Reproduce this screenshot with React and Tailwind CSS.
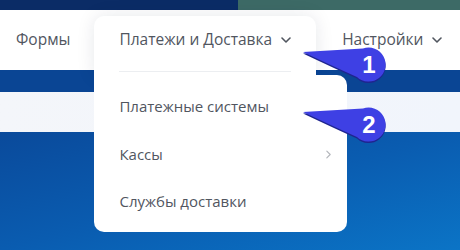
import React from 'react';

const Chevron = ({ className }) => (
    <svg viewBox="0 0 10 6" className={className} fill="none" stroke="currentColor" strokeWidth="1.6" strokeLinecap="round" strokeLinejoin="round">
        <path d="M1 1l4 4 4-4" />
    </svg>
);

// callout badge: circle with a tail pointing to the left
const Badge = ({ cx, cy, n }) => {
    const r = 17;
    const tip = `${cx - 66} ${cy - 13}`;
    const d = `M ${tip} L ${cx - 6} ${cy - r + 0.5} A ${r} ${r} 0 1 1 ${cx - 12} ${cy + 12} Q ${cx - 30} ${cy + 4} ${tip} Z`;
    return (
        <g>
            <path d={d} fill="#1f2590" transform="translate(0 1.5)" />
            <path d={d} fill="#3e40e4" />
            <text x={cx} y={cy + 8} textAnchor="middle" fill="#fff" fontSize="24" fontWeight="700" fontFamily="'Liberation Sans', Arial, sans-serif">{n}</text>
        </g>
    );
};

export default function App() {
    return (
        <div className="relative w-[460px] h-[250px] overflow-hidden bg-[#0a58ac] text-[15.5px] text-[#51565f]" style={{ fontFamily: "'Open Sans', 'Noto Sans', sans-serif" }}>
            {/* top band */}
            <div className="flex h-[10px]">
                <div className="w-[238px] bg-[#0b2c66]" />
                <div className="flex-1 bg-[#3d6a66]" />
            </div>

            {/* nav */}
            <div className="relative z-10 flex h-[60px] items-center bg-white pl-4">
                <span>Формы</span>
                <div className="relative ml-[24px] flex h-full items-center px-[25px]">
                    <div className="absolute left-0 right-0 top-[6px] h-[60px] rounded-t-[10px] bg-white shadow-[0_0_18px_rgba(20,30,60,0.10)]">
                        <div className="absolute bottom-[4px] left-[25px] right-[25px] h-px bg-[#eceef1]" />
                    </div>
                    <div className="absolute left-0 top-[65px] h-[157px] w-[253px] rounded-b-[10px] rounded-tr-[10px] bg-white pt-[7px] text-[15px]">
                        <div className="flex h-[48px] items-center px-[25px]">Платежные системы</div>
                        <div className="flex h-[48px] items-center justify-between pl-[25px] pr-[16px]">
                            <span>Кассы</span>
                            <svg viewBox="0 0 6 10" className="h-[9px] w-[5px] text-[#b3b6bb]" fill="none" stroke="currentColor" strokeWidth="1.4" strokeLinecap="round" strokeLinejoin="round">
                                <path d="M1 1l4 4-4 4" />
                            </svg>
                        </div>
                        <div className="flex h-[47px] items-center px-[25px]">Службы доставки</div>
                    </div>
                    <span className="relative flex items-center gap-[9px]">
                        Платежи и Доставка
                        <Chevron className="h-[6px] w-[10px]" />
                    </span>
                </div>
                <span className="ml-[26px] flex items-center gap-[9px]">
                    Настройки
                    <Chevron className="h-[6px] w-[10px]" />
                </span>
            </div>

            {/* page strips */}
            <div className="h-[22px] bg-[#0a4594]" />
            <div className="h-[40px] bg-gradient-to-r from-[#f4f6fa] to-[#f1f5fc]" />
            <div className="h-[118px] bg-gradient-to-br from-[#0a4a9b] via-[#0a5cb0] to-[#0b74c6]" />

            {/* callouts */}
            <svg className="pointer-events-none absolute inset-0 z-20" width="460" height="250">
                <Badge cx={369} cy={65} n="1" />
                <Badge cx={369} cy={125} n="2" />
            </svg>
        </div>
    );
}
